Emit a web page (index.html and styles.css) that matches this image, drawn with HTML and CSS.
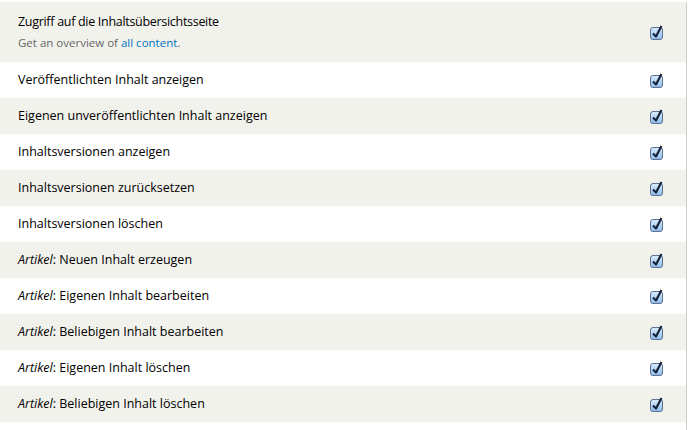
FILE: index.html
```html
<!DOCTYPE html>
<html lang="de">
<head>
<meta charset="utf-8">
<link rel="stylesheet" href="styles.css">
</head>
<body>
<div class="perms">
  <div class="row odd first">
    <div class="label">
      <div class="title">Zugriff auf die Inhaltsübersichtsseite</div>
      <div class="desc">Get an overview of <a href="#">all content</a>.</div>
    </div>
    <span class="cb"><svg width="14" height="16" viewBox="0 0 14 16"><defs><linearGradient id="g" x1="0" y1="0" x2="0" y2="1"><stop offset="0" stop-color="#d9ecfd"/><stop offset="1" stop-color="#8fbff0"/></linearGradient></defs><rect x="0.5" y="3.5" width="12" height="12" rx="2.5" fill="url(#g)" stroke="#5a6f8c"/><path d="M3 9.5 L6 12.5 L11.5 2" fill="none" stroke="#16243c" stroke-width="2.2" stroke-linejoin="round"/></svg></span>
  </div>
  <div class="row even">
    <div class="label">Veröffentlichten Inhalt anzeigen</div>
    <span class="cb"><svg width="14" height="16" viewBox="0 0 14 16"><rect x="0.5" y="3.5" width="12" height="12" rx="2.5" fill="url(#g)" stroke="#5a6f8c"/><path d="M3 9.5 L6 12.5 L11.5 2" fill="none" stroke="#16243c" stroke-width="2.2" stroke-linejoin="round"/></svg></span>
  </div>
  <div class="row odd">
    <div class="label">Eigenen unveröffentlichten Inhalt anzeigen</div>
    <span class="cb"><svg width="14" height="16" viewBox="0 0 14 16"><rect x="0.5" y="3.5" width="12" height="12" rx="2.5" fill="url(#g)" stroke="#5a6f8c"/><path d="M3 9.5 L6 12.5 L11.5 2" fill="none" stroke="#16243c" stroke-width="2.2" stroke-linejoin="round"/></svg></span>
  </div>
  <div class="row even">
    <div class="label">Inhaltsversionen anzeigen</div>
    <span class="cb"><svg width="14" height="16" viewBox="0 0 14 16"><rect x="0.5" y="3.5" width="12" height="12" rx="2.5" fill="url(#g)" stroke="#5a6f8c"/><path d="M3 9.5 L6 12.5 L11.5 2" fill="none" stroke="#16243c" stroke-width="2.2" stroke-linejoin="round"/></svg></span>
  </div>
  <div class="row odd">
    <div class="label">Inhaltsversionen zurücksetzen</div>
    <span class="cb"><svg width="14" height="16" viewBox="0 0 14 16"><rect x="0.5" y="3.5" width="12" height="12" rx="2.5" fill="url(#g)" stroke="#5a6f8c"/><path d="M3 9.5 L6 12.5 L11.5 2" fill="none" stroke="#16243c" stroke-width="2.2" stroke-linejoin="round"/></svg></span>
  </div>
  <div class="row even">
    <div class="label">Inhaltsversionen löschen</div>
    <span class="cb"><svg width="14" height="16" viewBox="0 0 14 16"><rect x="0.5" y="3.5" width="12" height="12" rx="2.5" fill="url(#g)" stroke="#5a6f8c"/><path d="M3 9.5 L6 12.5 L11.5 2" fill="none" stroke="#16243c" stroke-width="2.2" stroke-linejoin="round"/></svg></span>
  </div>
  <div class="row odd">
    <div class="label"><em>Artikel</em>: Neuen Inhalt erzeugen</div>
    <span class="cb"><svg width="14" height="16" viewBox="0 0 14 16"><rect x="0.5" y="3.5" width="12" height="12" rx="2.5" fill="url(#g)" stroke="#5a6f8c"/><path d="M3 9.5 L6 12.5 L11.5 2" fill="none" stroke="#16243c" stroke-width="2.2" stroke-linejoin="round"/></svg></span>
  </div>
  <div class="row even">
    <div class="label"><em>Artikel</em>: Eigenen Inhalt bearbeiten</div>
    <span class="cb"><svg width="14" height="16" viewBox="0 0 14 16"><rect x="0.5" y="3.5" width="12" height="12" rx="2.5" fill="url(#g)" stroke="#5a6f8c"/><path d="M3 9.5 L6 12.5 L11.5 2" fill="none" stroke="#16243c" stroke-width="2.2" stroke-linejoin="round"/></svg></span>
  </div>
  <div class="row odd">
    <div class="label"><em>Artikel</em>: Beliebigen Inhalt bearbeiten</div>
    <span class="cb"><svg width="14" height="16" viewBox="0 0 14 16"><rect x="0.5" y="3.5" width="12" height="12" rx="2.5" fill="url(#g)" stroke="#5a6f8c"/><path d="M3 9.5 L6 12.5 L11.5 2" fill="none" stroke="#16243c" stroke-width="2.2" stroke-linejoin="round"/></svg></span>
  </div>
  <div class="row even">
    <div class="label"><em>Artikel</em>: Eigenen Inhalt löschen</div>
    <span class="cb"><svg width="14" height="16" viewBox="0 0 14 16"><rect x="0.5" y="3.5" width="12" height="12" rx="2.5" fill="url(#g)" stroke="#5a6f8c"/><path d="M3 9.5 L6 12.5 L11.5 2" fill="none" stroke="#16243c" stroke-width="2.2" stroke-linejoin="round"/></svg></span>
  </div>
  <div class="row odd">
    <div class="label"><em>Artikel</em>: Beliebigen Inhalt löschen</div>
    <span class="cb"><svg width="14" height="16" viewBox="0 0 14 16"><rect x="0.5" y="3.5" width="12" height="12" rx="2.5" fill="url(#g)" stroke="#5a6f8c"/><path d="M3 9.5 L6 12.5 L11.5 2" fill="none" stroke="#16243c" stroke-width="2.2" stroke-linejoin="round"/></svg></span>
  </div>
</div>
</body>
</html>
```
FILE: styles.css
```css
html, body {
  margin: 0;
  padding: 0;
  background: #fff;
}
body {
  padding-top: 2px;
  height: 428px;
  overflow: hidden;
  font-family: "Open Sans", "DejaVu Sans", sans-serif;
  font-size: 12.5px;
  color: #000;
}
.perms {
  width: 686px;
  border-right: 1px solid #cfcfcf;
  min-height: 428px;
}
.row {
  display: flex;
  align-items: center;
  justify-content: space-between;
  height: 36px;
  padding: 0 22px 0 18px;
}
.row.first {
  height: 60px;
}
.odd {
  background: #f2f2ed;
}
.even {
  background: #fff;
}
.label {
  line-height: 16px;
}
.title {
  margin-bottom: 5px;
  letter-spacing: -0.3px;
}
.desc {
  font-size: 11.5px;
  color: #666;
}
.desc a {
  color: #0074bd;
  text-decoration: none;
}
.label em {
  font-style: italic;
}
.cb {
  display: flex;
  width: 14px;
  height: 16px;
}
```
